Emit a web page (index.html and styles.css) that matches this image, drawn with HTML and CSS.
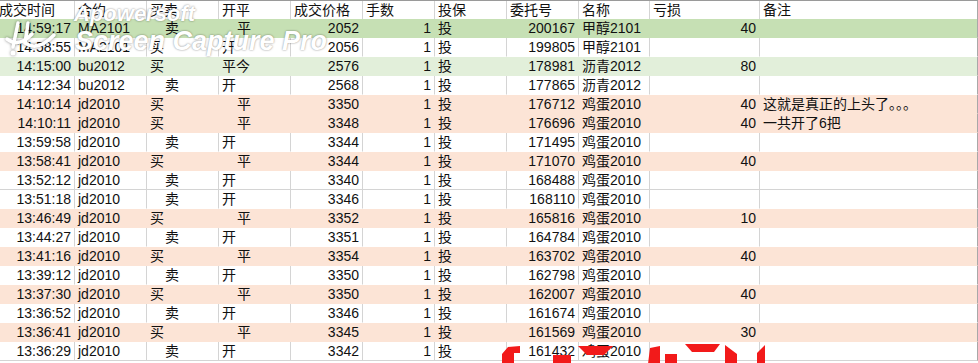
FILE: index.html
```html
<!DOCTYPE html>
<html lang="zh">
<head>
<meta charset="utf-8">
<link rel="stylesheet" href="styles.css">
<title>成交记录</title>
</head>
<body>
<div class="sheet">
  <div class="row head">
    <div class="c first">成交时间</div><div class="c">合约</div><div class="c">买卖</div><div class="c">开平</div><div class="c">成交价格</div><div class="c">手数</div><div class="c">投保</div><div class="c">委托号</div><div class="c">名称</div><div class="c">亏损</div><div class="c">备注</div>
  </div>
  <div class="row green">
    <div class="c r">14:59:17</div><div class="c">MA2101</div><div class="c ind">卖</div><div class="c ind">平</div><div class="c r">2052</div><div class="c r">1</div><div class="c">投</div><div class="c r">200167</div><div class="c">甲醇2101</div><div class="c r">40</div><div class="c"></div>
  </div>
  <div class="row nb">
    <div class="c r">14:58:55</div><div class="c">MA2101</div><div class="c">买</div><div class="c">开</div><div class="c r">2056</div><div class="c r">1</div><div class="c">投</div><div class="c r">199805</div><div class="c">甲醇2101</div><div class="c r"></div><div class="c"></div>
  </div>
  <div class="row lgreen">
    <div class="c r">14:15:00</div><div class="c">bu2012</div><div class="c">买</div><div class="c">平今</div><div class="c r">2576</div><div class="c r">1</div><div class="c">投</div><div class="c r">178981</div><div class="c">沥青2012</div><div class="c r">80</div><div class="c"></div>
  </div>
  <div class="row nb">
    <div class="c r">14:12:34</div><div class="c">bu2012</div><div class="c ind">卖</div><div class="c">开</div><div class="c r">2568</div><div class="c r">1</div><div class="c">投</div><div class="c r">177865</div><div class="c">沥青2012</div><div class="c r"></div><div class="c"></div>
  </div>
  <div class="row pink">
    <div class="c r">14:10:14</div><div class="c">jd2010</div><div class="c">买</div><div class="c ind">平</div><div class="c r">3350</div><div class="c r">1</div><div class="c">投</div><div class="c r">176712</div><div class="c">鸡蛋2010</div><div class="c r">40</div><div class="c">这就是真正的上头了。。。</div>
  </div>
  <div class="row pink">
    <div class="c r">14:10:11</div><div class="c">jd2010</div><div class="c">买</div><div class="c ind">平</div><div class="c r">3348</div><div class="c r">1</div><div class="c">投</div><div class="c r">176696</div><div class="c">鸡蛋2010</div><div class="c r">40</div><div class="c">一共开了6把</div>
  </div>
  <div class="row nb">
    <div class="c r">13:59:58</div><div class="c">jd2010</div><div class="c ind">卖</div><div class="c">开</div><div class="c r">3344</div><div class="c r">1</div><div class="c">投</div><div class="c r">171495</div><div class="c">鸡蛋2010</div><div class="c r"></div><div class="c"></div>
  </div>
  <div class="row pink">
    <div class="c r">13:58:41</div><div class="c">jd2010</div><div class="c">买</div><div class="c ind">平</div><div class="c r">3344</div><div class="c r">1</div><div class="c">投</div><div class="c r">171070</div><div class="c">鸡蛋2010</div><div class="c r">40</div><div class="c"></div>
  </div>
  <div class="row">
    <div class="c r">13:52:12</div><div class="c">jd2010</div><div class="c ind">卖</div><div class="c">开</div><div class="c r">3340</div><div class="c r">1</div><div class="c">投</div><div class="c r">168488</div><div class="c">鸡蛋2010</div><div class="c r"></div><div class="c"></div>
  </div>
  <div class="row nb">
    <div class="c r">13:51:18</div><div class="c">jd2010</div><div class="c ind">卖</div><div class="c">开</div><div class="c r">3346</div><div class="c r">1</div><div class="c">投</div><div class="c r">168110</div><div class="c">鸡蛋2010</div><div class="c r"></div><div class="c"></div>
  </div>
  <div class="row pink">
    <div class="c r">13:46:49</div><div class="c">jd2010</div><div class="c">买</div><div class="c ind">平</div><div class="c r">3352</div><div class="c r">1</div><div class="c">投</div><div class="c r">165816</div><div class="c">鸡蛋2010</div><div class="c r">10</div><div class="c"></div>
  </div>
  <div class="row nb">
    <div class="c r">13:44:27</div><div class="c">jd2010</div><div class="c ind">卖</div><div class="c">开</div><div class="c r">3351</div><div class="c r">1</div><div class="c">投</div><div class="c r">164784</div><div class="c">鸡蛋2010</div><div class="c r"></div><div class="c"></div>
  </div>
  <div class="row pink">
    <div class="c r">13:41:16</div><div class="c">jd2010</div><div class="c">买</div><div class="c ind">平</div><div class="c r">3354</div><div class="c r">1</div><div class="c">投</div><div class="c r">163702</div><div class="c">鸡蛋2010</div><div class="c r">40</div><div class="c"></div>
  </div>
  <div class="row nb">
    <div class="c r">13:39:12</div><div class="c">jd2010</div><div class="c ind">卖</div><div class="c">开</div><div class="c r">3350</div><div class="c r">1</div><div class="c">投</div><div class="c r">162798</div><div class="c">鸡蛋2010</div><div class="c r"></div><div class="c"></div>
  </div>
  <div class="row pink">
    <div class="c r">13:37:30</div><div class="c">jd2010</div><div class="c">买</div><div class="c ind">平</div><div class="c r">3350</div><div class="c r">1</div><div class="c">投</div><div class="c r">162007</div><div class="c">鸡蛋2010</div><div class="c r">40</div><div class="c"></div>
  </div>
  <div class="row nb">
    <div class="c r">13:36:52</div><div class="c">jd2010</div><div class="c ind">卖</div><div class="c">开</div><div class="c r">3346</div><div class="c r">1</div><div class="c">投</div><div class="c r">161674</div><div class="c">鸡蛋2010</div><div class="c r"></div><div class="c"></div>
  </div>
  <div class="row pink">
    <div class="c r">13:36:41</div><div class="c">jd2010</div><div class="c">买</div><div class="c ind">平</div><div class="c r">3345</div><div class="c r">1</div><div class="c">投</div><div class="c r">161569</div><div class="c">鸡蛋2010</div><div class="c r">30</div><div class="c"></div>
  </div>
  <div class="row">
    <div class="c r">13:36:29</div><div class="c">jd2010</div><div class="c ind">卖</div><div class="c">开</div><div class="c r">3342</div><div class="c r">1</div><div class="c">投</div><div class="c r">161432</div><div class="c">鸡蛋2010</div><div class="c r"></div><div class="c"></div>
  </div>

  <div class="wm">
    <svg class="wm-logo" width="66" height="40" viewBox="0 0 66 40">
      <path d="M14 6 L9 30 M3 22 Q15 31 28 17 M24 6 L21 26 Q34 35 50 18" fill="none" stroke="#fff" stroke-width="3.5" stroke-linecap="round"/>
      <circle cx="9" cy="36" r="2.5" fill="#fff"/>
    </svg>
    <div class="wm-text">
      <div class="wm-a">Apowersoft</div>
      <div class="wm-b">Screen Capture Pro</div>
    </div>
  </div>

  <svg class="red" width="280" height="20" viewBox="0 0 280 20">
    <path d="M8 3 L20 2 L20 9 L14 9 L14 20 L2 20 L2 10 Z" fill="#f21a1a"/>
    <rect x="53" y="11" width="18" height="9" fill="#f21a1a"/>
    <path d="M78 2 L113 2 L104 11 L87 11 Z" fill="#f21a1a"/>
    <path d="M150 4 L160 2 L160 20 L148 20 Z" fill="#f21a1a"/>
    <rect x="165" y="10" width="12" height="10" fill="#f21a1a"/>
    <path d="M185 0 L220 0 L214 8 L192 8 Z" fill="#f21a1a"/>
    <path d="M225 1 L237 10 L237 20 L225 20 Z" fill="#f21a1a"/>
    <path d="M265 1 L257 9 L257 20 L265 20 Z" fill="#f21a1a"/>
  </svg>
</div>
</body>
</html>
```

FILE: styles.css
```css
html, body {
  margin: 0;
  padding: 0;
  background: #ffffff;
}

.sheet {
  position: relative;
  width: 978px;
  height: 363px;
  overflow: hidden;
  border-top: 1px solid #9a9a9a;
  box-sizing: border-box;
  font-family: "Liberation Sans", "Noto Sans CJK SC", sans-serif;
  font-size: 14px;
  color: #111;
}

.row {
  display: grid;
  grid-template-columns: 75px 72px 72px 72px 72px 72px 72px 72px 71px 110px 218px;
  height: 19px;
}

.row.head {
  height: 18px;
}

.c {
  box-sizing: border-box;
  border-right: 1px solid #d4d4d4;
  border-bottom: 1px solid #d4d4d4;
  padding: 1px 2px 0 3px;
  line-height: 17px;
  white-space: nowrap;
  overflow: visible;
}

.c:last-child {
  border-right: 1px solid #a8a8a8;
}

.head .c {
  border-bottom: none;
  line-height: 17px;
}

.head .first {
  text-indent: -4px;
}

.r {
  text-align: right;
  padding-right: 3px;
}

.ind {
  padding-left: 18px;
}

.nb .c {
  border-bottom-color: transparent;
}

.green .c {
  background: #c6e0b4;
  border-color: #c6e0b4;
}

.lgreen .c {
  background: #e2efda;
  border-color: #e2efda;
}

.pink .c {
  background: #fce4d6;
  border-color: #fce4d6;
}

.green .c:last-child,
.lgreen .c:last-child,
.pink .c:last-child {
  border-right-color: #a8a8a8;
}

.wm {
  position: absolute;
  left: 4px;
  top: 0;
  display: flex;
  align-items: flex-start;
  gap: 2px;
  pointer-events: none;
}

.wm-logo {
  margin-top: 16px;
  filter: drop-shadow(0 0 1.5px rgba(0, 0, 0, 0.45));
}

.wm-text {
  display: flex;
  flex-direction: column;
  color: #ffffff;
  font-family: "Liberation Sans", sans-serif;
  font-style: italic;
  font-weight: bold;
  text-shadow: 0 0 2px rgba(0, 0, 0, 0.5);
}

.wm-a {
  font-size: 22px;
  line-height: 26px;
  margin-left: 2px;
}

.wm-b {
  font-size: 27px;
  line-height: 28px;
  margin-left: 3px;
}

.red {
  position: absolute;
  left: 500px;
  top: 343px;
}
```
